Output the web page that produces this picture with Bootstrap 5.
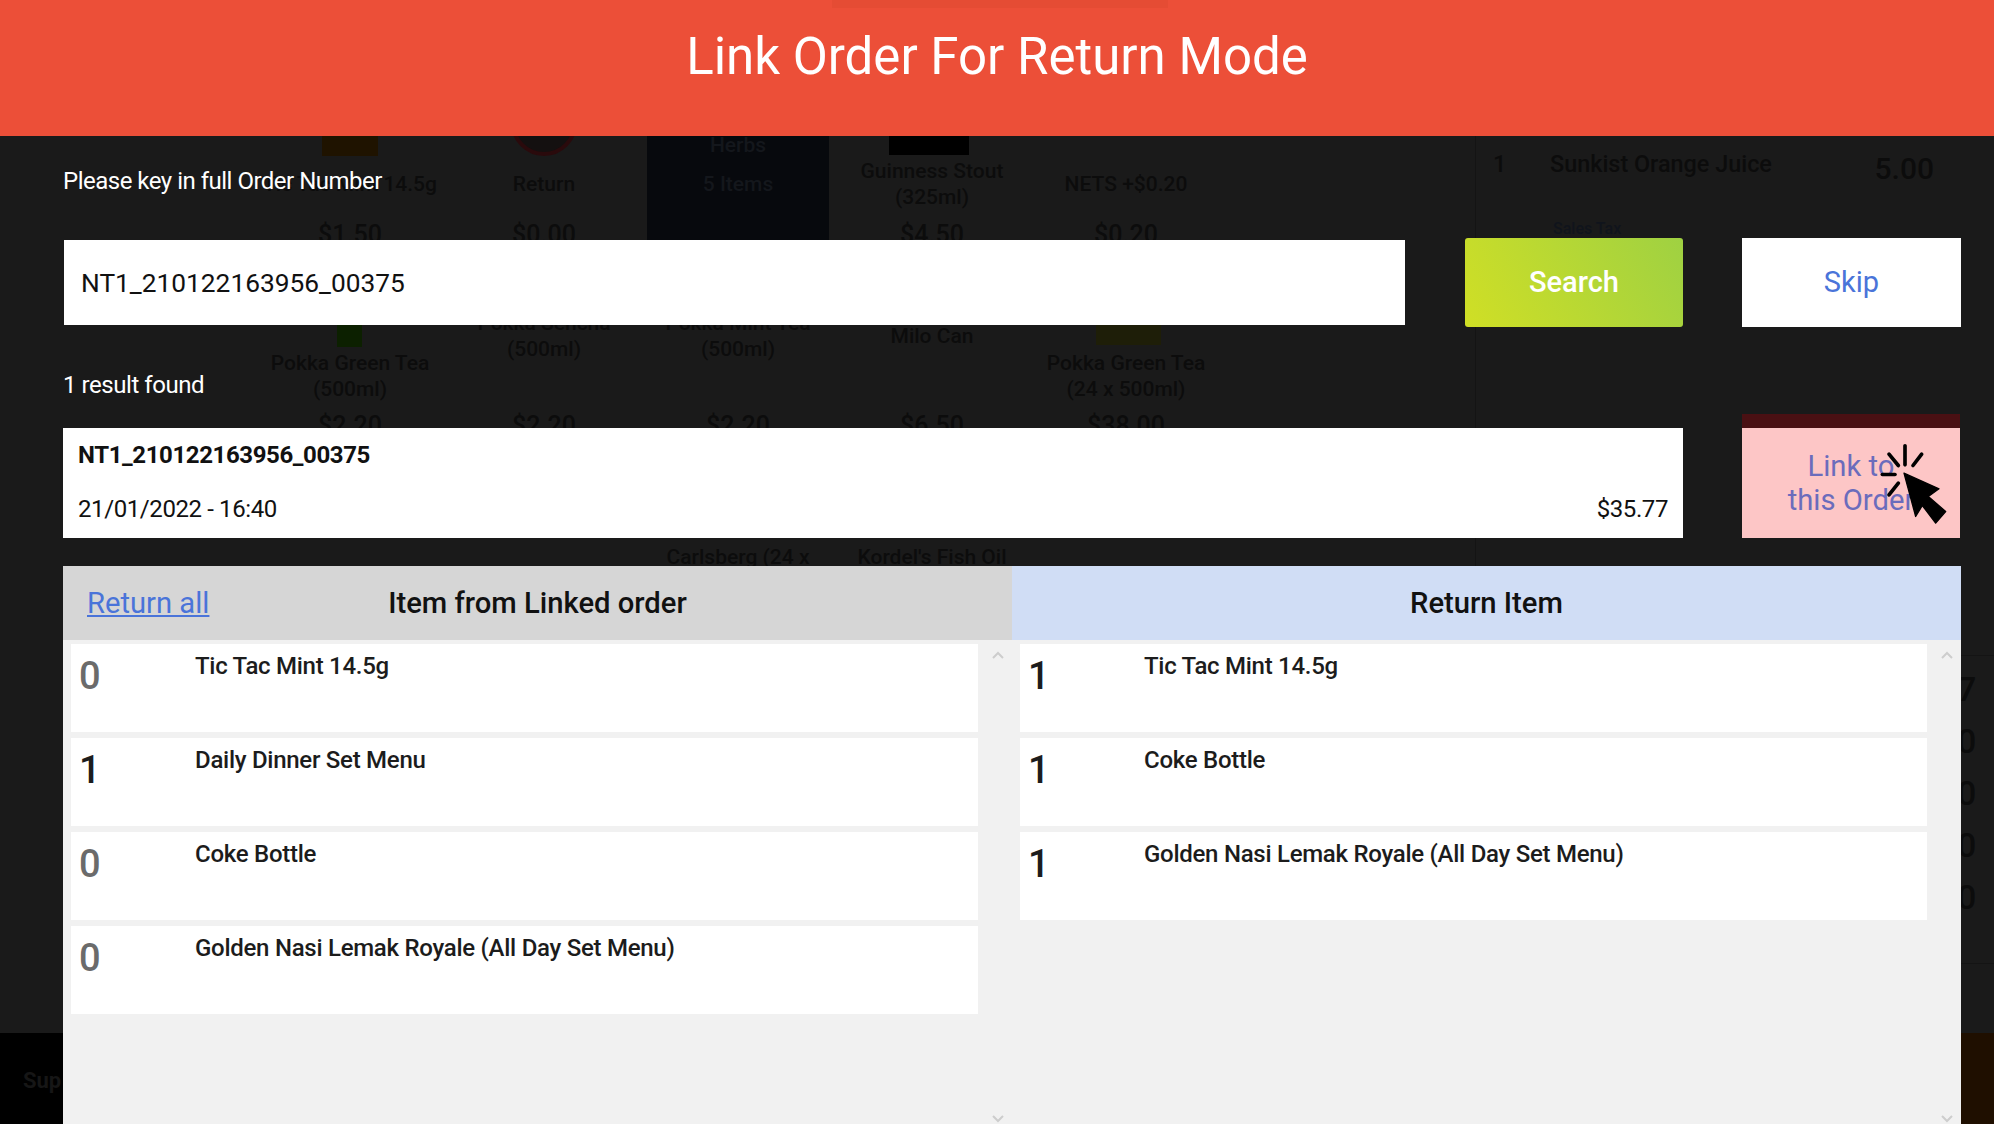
<!DOCTYPE html>
<html lang="en">

<head>
    <meta charset="UTF-8">
    <meta name="viewport" content="width=device-width, initial-scale=1.0">
    <title>Link Order For Return Mode</title>
    <link href="https://cdn.jsdelivr.net/npm/bootstrap@5.3.2/dist/css/bootstrap.min.css" rel="stylesheet">
    <style>
        html, body {
            height: 100%;
            overflow: hidden;
        }

        body {
            background-color: #1a1a1a;
            font-family: Roboto, "Liberation Sans", sans-serif;
        }

        .screen {
            height: 1124px;
            overflow: hidden;
        }

        /* dimmed POS screen behind the dialog */
        .ghost-layer {
            inset: 0;
            z-index: 0;
            color: #0c0c0c;
            font-size: 21px;
            font-weight: 500;
            line-height: 26px;
            text-align: center;
        }

        .ghost-grid {
            position: absolute;
            left: 253px;
            top: 60px;
            width: 970px;
            display: grid;
            grid-template-columns: repeat(5, 194px);
            grid-auto-rows: 191px;
        }

        .ghost-tile {
            padding-top: 98px;
            position: relative;
        }

        .ghost-tile.dark::before {
            content: "";
            position: absolute;
            inset: 0 6px;
            background-color: #07090d;
        }

        .ghost-tile.dark .ghost-name {
            color: #14171c;
        }

        .ghost-tile.dark .ghost-name + .ghost-name {
            margin-top: -13px;
        }

        .ghost-name {
            position: relative;
            height: 52px;
            display: flex;
            align-items: center;
            justify-content: center;
        }

        .ghost-name.up {
            top: -39px;
        }

        .ghost-name.low {
            top: 1px;
        }

        .ghost-name.last {
            top: 4px;
        }

        .ghost-price {
            font-size: 25px;
            margin-top: 12px;
        }

        .ghost-pic {
            position: absolute;
        }

        .pic-snack {
            left: 69px;
            top: 60px;
            width: 56px;
            height: 36px;
            background-color: #1f1300;
        }

        .pic-logo {
            left: 64px;
            top: 30px;
            width: 66px;
            height: 66px;
            border-radius: 50%;
            border: 4px solid #2a0a0c;
            background-color: #141010;
        }

        .pic-can {
            left: 54px;
            top: 60px;
            width: 80px;
            height: 35px;
            background-color: #000;
        }

        .pic-bottle {
            left: 84px;
            top: 60px;
            width: 25px;
            height: 36px;
            background-color: #0c2000;
        }

        .pic-carton {
            left: 67px;
            top: 60px;
            width: 65px;
            height: 34px;
            background-color: #1e1e08;
        }

        .pic-beer {
            left: 57px;
            top: 84px;
            width: 77px;
            height: 12px;
            background-color: #000;
        }

        .ghost-line {
            position: absolute;
            left: 1475px;
            top: 136px;
            bottom: 92px;
            width: 1px;
            background-color: #141414;
        }

        .ghost-rule {
            position: absolute;
            left: 1961px;
            right: 0;
            height: 1px;
            background-color: #141414;
        }

        .rule-top {
            top: 655px;
        }

        .rule-bottom {
            top: 963px;
        }

        .ghost-order {
            position: absolute;
            left: 1493px;
            top: 151px;
            width: 441px;
            font-size: 23.4px;
        }

        .ghost-qty {
            width: 57px;
            text-align: left;
        }

        .ghost-sum {
            font-size: 30px;
            line-height: 36px;
        }

        .ghost-note {
            position: absolute;
            left: 1553px;
            top: 216px;
            font-size: 16px;
            color: #10141c;
        }

        .ghost-totals {
            position: absolute;
            left: 1957px;
            top: 663px;
            font-size: 34px;
            line-height: 52px;
        }

        .ghost-footer {
            position: absolute;
            left: 0;
            right: 0;
            top: 1033px;
            bottom: 0;
            background: linear-gradient(90deg, #000 1960px, #1f0f00 1960px);
            padding: 35px 23px;
            font-weight: 700;
            font-size: 22px;
            text-align: left;
            color: #161616;
        }

        .dialog-wrap {
            z-index: 1;
        }

        .title-bar {
            position: relative;
            height: 136px;
            background-color: #ec4f38;
            color: #fff;
            font-size: 51px;
            font-weight: 400;
            padding-top: 27px;
            line-height: 60px;
        }

        .title-notch {
            position: absolute;
            left: 832px;
            top: 0;
            width: 336px;
            height: 8px;
            background-color: #e54c34;
        }

        .dialog-body {
            padding: 0 33px 0 63px;
        }

        .prompt-text {
            height: 102px;
            padding-top: 30px;
            font-size: 24px;
            letter-spacing: -0.5px;
            line-height: 30px;
            color: #fff;
        }

        .order-input {
            width: 1341px;
            height: 85px;
            margin-left: 1px;
            padding: 0 17px;
            border: 0;
            border-radius: 0;
            font-size: 26.3px;
            color: #111;
        }

        .search-btn {
            width: 218px;
            height: 89px;
            margin-left: 60px;
            border: 0;
            border-radius: 3px;
            background: linear-gradient(60deg, #d0df25, #9fd142);
            color: #fff;
            font-size: 29px;
            font-weight: 500;
        }

        .skip-btn {
            width: 219px;
            height: 89px;
            margin-left: 59px;
            border: 0;
            border-radius: 0;
            background-color: #fff;
            color: #4a74d9;
            font-size: 29px;
        }

        .result-label {
            height: 101px;
            padding-top: 43px;
            font-size: 24px;
            letter-spacing: -0.45px;
            line-height: 30px;
            color: #fff;
        }

        .result-card {
            width: 1620px;
            height: 110px;
            background-color: #fff;
            padding: 12px 15px 14px;
            color: #111;
            font-size: 24px;
            letter-spacing: -0.4px;
            line-height: 30px;
        }

        .link-wrap {
            width: 218px;
            margin-left: 59px;
            margin-top: -14px;
            border-top: 14px solid #4a1013;
        }

        .link-btn {
            width: 100%;
            height: 110px;
            border: 0;
            border-radius: 0;
            background-color: #fdc6c6;
            color: #6b6cbc;
            font-size: 29.2px;
            line-height: 34px;
            padding: 0;
        }

        .cursor-mark {
            position: absolute;
            left: 137px;
            top: 15px;
            width: 70px;
            height: 82px;
        }

        .items-panel {
            margin-top: 28px;
            height: 600px;
            background-color: #f1f1f1;
        }

        .panel-col {
            flex: 1 1 0;
            position: relative;
        }

        .panel-head {
            height: 74px;
            font-size: 29.2px;
            font-weight: 500;
            line-height: 74px;
            color: #111;
            text-align: center;
            position: relative;
        }

        .head-left {
            background-color: #d6d6d6;
        }

        .head-right {
            background-color: #d0ddf5;
        }

        .return-all {
            position: absolute;
            left: 24px;
            top: 0;
            color: #4a74d9;
            font-weight: 400;
        }

        .item-list {
            padding: 4px 0 0 8px;
            display: flex;
            flex-direction: column;
            gap: 6px;
        }

        .item-row {
            width: 907px;
            height: 88px;
            background-color: #fff;
            display: flex;
            color: #1c1c1c;
        }

        .item-qty {
            width: 124px;
            padding: 8px 0 0 8px;
            font-size: 38px;
            line-height: 48px;
            font-weight: 500;
        }

        .item-qty.none {
            color: #6b6b6b;
        }

        .item-name {
            padding-top: 7px;
            font-size: 24px;
            letter-spacing: -0.27px;
            line-height: 30px;
            font-weight: 500;
        }

        .scroll-arrow {
            position: absolute;
            right: 8px;
            width: 12px;
            height: 8px;
        }

        .arrow-up {
            top: 85px;
        }

        .arrow-down {
            top: 549px;
        }
    </style>
</head>

<body>
    <div class="screen position-relative">
        <!-- dimmed screen behind -->
        <div class="ghost-layer position-absolute">
            <div class="ghost-grid">
                <div class="ghost-tile"><div class="ghost-pic pic-snack"></div><div class="ghost-name">Tic Tac Mint 14.5g</div><div class="ghost-price">$1.50</div></div>
                <div class="ghost-tile"><div class="ghost-pic pic-logo"></div><div class="ghost-name">Return</div><div class="ghost-price">$0.00</div></div>
                <div class="ghost-tile dark"><div class="ghost-name up">Herbs</div><div class="ghost-name up">5 Items</div></div>
                <div class="ghost-tile"><div class="ghost-pic pic-can"></div><div class="ghost-name">Guinness Stout<br>(325ml)</div><div class="ghost-price">$4.50</div></div>
                <div class="ghost-tile"><div class="ghost-name">NETS +$0.20</div><div class="ghost-price">$0.20</div></div>
                <div class="ghost-tile"><div class="ghost-pic pic-bottle"></div><div class="ghost-name low">Pokka Green Tea<br>(500ml)</div><div class="ghost-price">$2.20</div></div>
                <div class="ghost-tile"><div class="ghost-name up">Pokka Sencha<br>(500ml)</div><div class="ghost-price">$2.20</div></div>
                <div class="ghost-tile"><div class="ghost-name up">Pokka Mint Tea<br>(500ml)</div><div class="ghost-price">$2.20</div></div>
                <div class="ghost-tile"><div class="ghost-name up">Milo Can</div><div class="ghost-price">$6.50</div></div>
                <div class="ghost-tile"><div class="ghost-pic pic-carton"></div><div class="ghost-name low">Pokka Green Tea<br>(24 x 500ml)</div><div class="ghost-price">$38.00</div></div>
                <div class="ghost-tile"></div>
                <div class="ghost-tile"></div>
                <div class="ghost-tile"><div class="ghost-pic pic-beer"></div><div class="ghost-name last">Carlsberg (24 x<br>330ml)</div></div>
                <div class="ghost-tile"><div class="ghost-name last">Kordel's Fish Oil<br>&nbsp;</div></div>
            </div>
            <div class="ghost-line"></div>
            <div class="ghost-rule rule-top"></div>
            <div class="ghost-rule rule-bottom"></div>
            <div class="ghost-order d-flex">
                <span class="ghost-qty">1</span>
                <span class="flex-grow-1 text-start">Sunkist Orange Juice</span>
                <span class="ghost-sum">5.00</span>
            </div>
            <div class="ghost-note">Sales Tax</div>
            <div class="ghost-totals">7<br>0<br>0<br>0<br>0</div>
            <div class="ghost-footer">Sup</div>
        </div>

        <div class="dialog-wrap position-relative">
            <div class="title-bar text-center">
                <div class="title-notch"></div>
                Link Order For Return Mode
            </div>

            <div class="dialog-body">
                <div class="prompt-text">Please key in full Order Number</div>

                <div class="d-flex align-items-center">
                    <input class="order-input form-control" type="text" value="NT1_210122163956_00375">
                    <button class="search-btn btn" type="button">Search</button>
                    <button class="skip-btn btn" type="button">Skip</button>
                </div>

                <div class="result-label">1 result found</div>

                <div class="d-flex">
                    <div class="result-card d-flex flex-column justify-content-between">
                        <div class="fw-bold">NT1_210122163956_00375</div>
                        <div class="d-flex justify-content-between">
                            <span>21/01/2022 - 16:40</span>
                            <span>$35.77</span>
                        </div>
                    </div>
                    <div class="link-wrap position-relative">
                        <button class="link-btn btn" type="button">Link to<br>this Order</button>
                        <svg class="cursor-mark" viewBox="480 125 210 245" aria-hidden="true">
                            <g stroke="#000" stroke-width="11" stroke-linecap="round">
                                <line x1="558" y1="133" x2="558" y2="190" />
                                <line x1="608" y1="158" x2="582" y2="192" />
                                <line x1="510" y1="158" x2="538" y2="192" />
                                <line x1="490" y1="219" x2="528" y2="219" />
                                <line x1="538" y1="245" x2="510" y2="280" />
                            </g>
                            <path d="M555 215 L660 262 L628 285 L680 330 L650 365 L610 312 L590 345 Z" fill="#000" stroke="#000" stroke-width="4" stroke-linejoin="round" />
                        </svg>
                    </div>
                </div>

                <div class="items-panel d-flex">
                    <div class="panel-col">
                        <div class="panel-head head-left">
                            <a href="#" class="return-all">Return all</a>
                            Item from Linked order
                        </div>
                        <div class="item-list">
                            <div class="item-row"><div class="item-qty none">0</div><div class="item-name">Tic Tac Mint 14.5g</div></div>
                            <div class="item-row"><div class="item-qty">1</div><div class="item-name">Daily Dinner Set Menu</div></div>
                            <div class="item-row"><div class="item-qty none">0</div><div class="item-name">Coke Bottle</div></div>
                            <div class="item-row"><div class="item-qty none">0</div><div class="item-name">Golden Nasi Lemak Royale (All Day Set Menu)</div></div>
                        </div>
                        <svg class="scroll-arrow arrow-up" viewBox="0 0 12 8" fill="none" stroke="#cdcdcd" stroke-width="2" aria-hidden="true"><path d="M1 7 L6 2 L11 7" /></svg>
                        <svg class="scroll-arrow arrow-down" viewBox="0 0 12 8" fill="none" stroke="#cdcdcd" stroke-width="2" aria-hidden="true"><path d="M1 1 L6 6 L11 1" /></svg>
                    </div>
                    <div class="panel-col">
                        <div class="panel-head head-right">Return Item</div>
                        <div class="item-list">
                            <div class="item-row"><div class="item-qty">1</div><div class="item-name">Tic Tac Mint 14.5g</div></div>
                            <div class="item-row"><div class="item-qty">1</div><div class="item-name">Coke Bottle</div></div>
                            <div class="item-row"><div class="item-qty">1</div><div class="item-name">Golden Nasi Lemak Royale (All Day Set Menu)</div></div>
                        </div>
                        <svg class="scroll-arrow arrow-up" viewBox="0 0 12 8" fill="none" stroke="#cdcdcd" stroke-width="2" aria-hidden="true"><path d="M1 7 L6 2 L11 7" /></svg>
                        <svg class="scroll-arrow arrow-down" viewBox="0 0 12 8" fill="none" stroke="#cdcdcd" stroke-width="2" aria-hidden="true"><path d="M1 1 L6 6 L11 1" /></svg>
                    </div>
                </div>
            </div>
        </div>
    </div>

    <script src="https://cdn.jsdelivr.net/npm/bootstrap@5.3.2/dist/js/bootstrap.bundle.min.js"></script>
</body>

</html>
